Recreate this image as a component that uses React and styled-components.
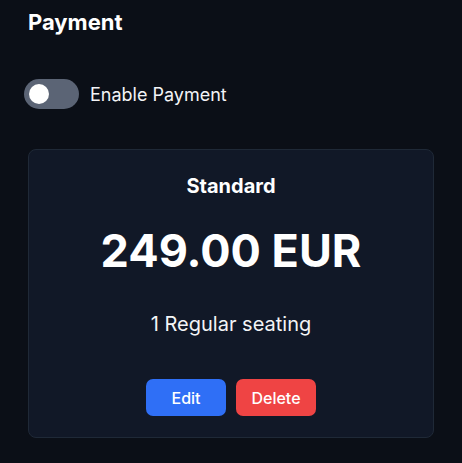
import React, {useState} from 'react';
import styled, {createGlobalStyle} from 'styled-components';

export default function App() {
    const [enabled, setEnabled] = useState(false);

    return (
        <>
            <GlobalStyle />
            <Page>
                <Title>Payment</Title>

                <ToggleRow>
                    <Switch $on={enabled} onClick={() => setEnabled(!enabled)}>
                        <Knob $on={enabled} />
                    </Switch>
                    <ToggleLabel>Enable Payment</ToggleLabel>
                </ToggleRow>

                <PlanCard>
                    <PlanName>Standard</PlanName>
                    <Price>249.00 EUR</Price>
                    <Seating>1 Regular seating</Seating>
                    <Actions>
                        <ActionButton $variant="edit">Edit</ActionButton>
                        <ActionButton $variant="delete">Delete</ActionButton>
                    </Actions>
                </PlanCard>
            </Page>
        </>
    );
}

const GlobalStyle = createGlobalStyle`
    html, body {
        margin: 0;
        padding: 0;
        background: #0b0f17;
    }
    body {
        font-family: Inter, "Noto Sans", sans-serif;
        color: #ffffff;
    }
`;

const Page = styled.div`
    min-height: 100vh;
    padding: 8px 28px 24px 28px;
    box-sizing: border-box;
    display: flex;
    flex-direction: column;
`;

const Title = styled.h2`
    margin: 0;
    font-size: 22px;
    font-weight: 700;
    line-height: 28px;
`;

const ToggleRow = styled.div`
    display: flex;
    align-items: center;
    gap: 11px;
    margin-top: 43px;
    margin-left: -4px;
`;

const Switch = styled.button`
    width: 55px;
    height: 30px;
    border-radius: 15px;
    border: none;
    padding: 0;
    background: ${p => (p.$on ? '#2f6ff6' : '#5b6475')};
    position: relative;
    cursor: pointer;
`;

const Knob = styled.span`
    position: absolute;
    top: 5px;
    left: ${p => (p.$on ? '30px' : '5px')};
    width: 20px;
    height: 20px;
    border-radius: 50%;
    background: #ffffff;
    transition: left 0.2s ease;
`;

const ToggleLabel = styled.span`
    font-size: 18px;
    color: #f3f4f6;
`;

const PlanCard = styled.div`
    margin-top: 40px;
    background: #111827;
    border: 1px solid #1f2937;
    border-radius: 8px;
    padding: 24px 20px 21px;
    display: flex;
    flex-direction: column;
    align-items: center;
`;

const PlanName = styled.div`
    font-size: 20px;
    font-weight: 700;
    line-height: 24px;
`;

const Price = styled.div`
    margin-top: 25px;
    font-size: 45px;
    font-weight: 700;
    line-height: 56px;
`;

const Seating = styled.div`
    margin-top: 33px;
    font-size: 20px;
    line-height: 24px;
    color: #f3f4f6;
`;

const Actions = styled.div`
    display: flex;
    gap: 10px;
    margin-top: 43px;
`;

const ActionButton = styled.button`
    width: 80px;
    height: 37px;
    border: none;
    border-radius: 7px;
    font-family: inherit;
    font-size: 16px;
    font-weight: 500;
    color: #ffffff;
    background: ${p => (p.$variant === 'delete' ? '#ef4444' : '#2f6ff6')};
    cursor: pointer;
`;
